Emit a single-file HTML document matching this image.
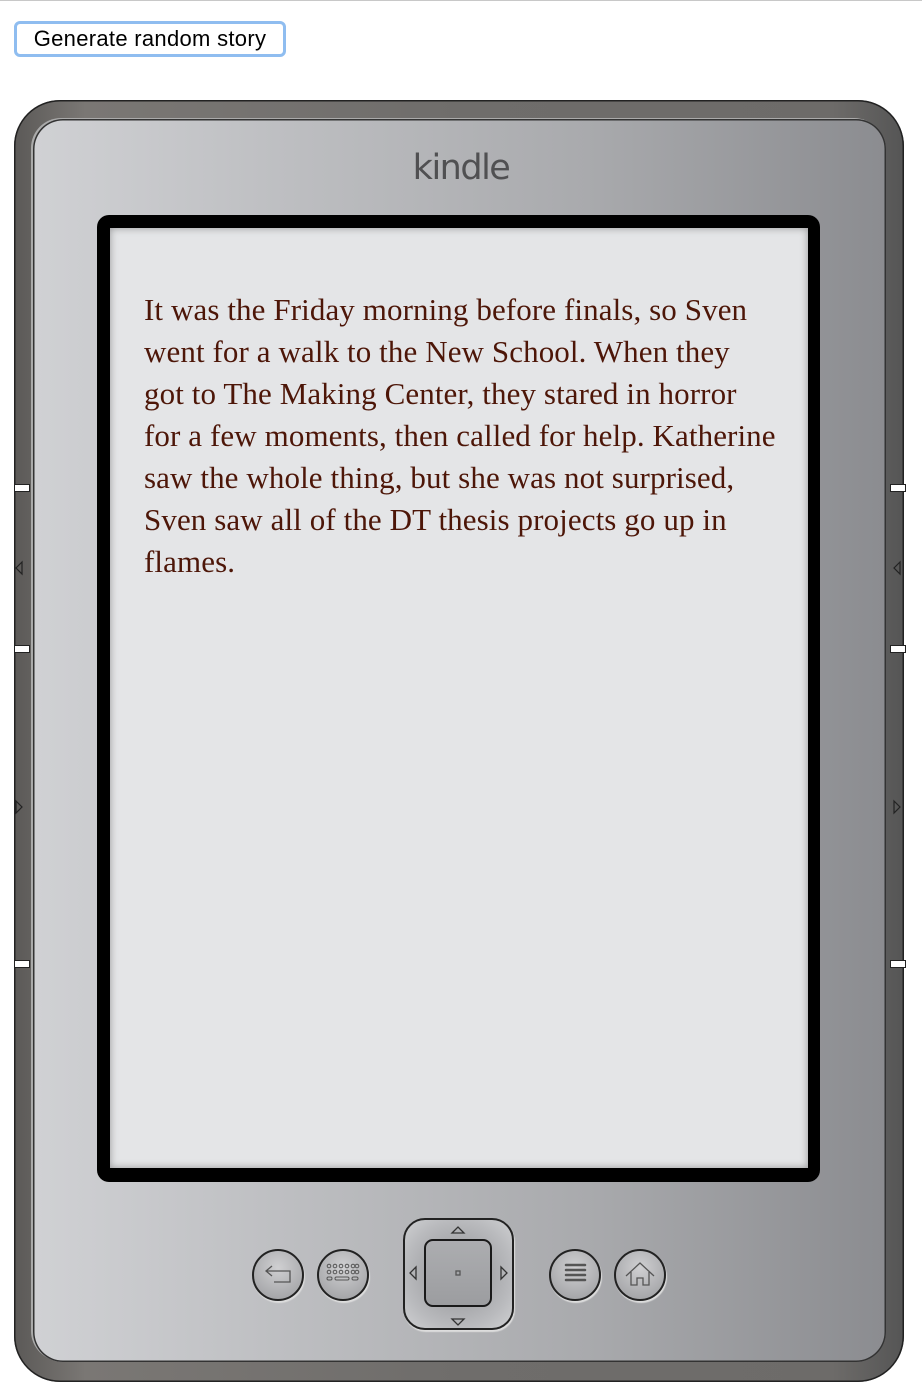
<!DOCTYPE html>
<html><head><style>
html,body{margin:0;padding:0;background:#fff;width:922px;height:1398px;overflow:hidden;position:relative;font-family:"Liberation Sans",sans-serif}
.topline{position:absolute;left:0;top:0;width:922px;height:1px;background:#c8c8c8}
button{position:absolute;left:14px;top:21px;width:272px;height:36px;border:3px solid #8fbdf0;border-radius:6px;background:#fff;font:22px "Liberation Sans",sans-serif;color:#000;padding:0;box-sizing:border-box;letter-spacing:0.3px}
.outer{position:absolute;left:14px;top:100px;width:890px;height:1282px;border-radius:46px;background:linear-gradient(90deg,#5b5957,#7a7774 8%,#6f6d6b 50%,#6d6b69 92%,#555);box-shadow:inset 0 0 0 1.5px #222}
.inner{position:absolute;left:33px;top:119px;width:853px;height:1243px;border-radius:30px;background:linear-gradient(90deg,#d0d1d4,#bdbec1 30%,#a9aaad 65%,#8b8c90);box-shadow:inset 0 0 0 1.5px #333, -2px -1px 0 #aaa}
.notch{position:absolute;width:16px;height:8px;background:#fff;border:1.5px solid #222;box-sizing:border-box}
.logo{position:absolute;left:0;width:922px;top:148px;text-align:center;font:35px "DejaVu Sans","Liberation Sans",sans-serif;color:#505052;letter-spacing:-1.5px}
.screen{position:absolute;left:97px;top:215px;width:723px;height:967px;border-radius:12px;background:#000}
.paper{position:absolute;left:110px;top:228px;width:698px;height:940px;background:#e4e5e7;box-shadow:inset 0 0 8px rgba(0,0,0,.35)}
.text{position:absolute;left:144px;top:289px;font:31px/42px "Liberation Serif",serif;color:#4d1608;white-space:nowrap;letter-spacing:0.1px}
.btn{position:absolute;width:52px;height:52px;border-radius:50%;border:2px solid #222;box-sizing:border-box;background:radial-gradient(circle at 50% 35%,#d0d0d2,#9a9b9e);box-shadow:1px 2px 1px #ddd}
.dpad{position:absolute;left:403px;top:1218px;width:111px;height:112px;border-radius:22px;border:2.5px solid #222;box-sizing:border-box;background:radial-gradient(circle,#8e8f92,#b9babd 70%,#cfd0d2);box-shadow:1px 2px 1px #ddd}
.dc{position:absolute;left:19px;top:19px;width:68px;height:68px;border-radius:9px;border:2.5px solid #1a1a1a;box-sizing:border-box;background:linear-gradient(#acadb0,#9c9da0)}
</style></head><body>
<div class="topline"></div>
<button>Generate random story</button>
<div class="outer"></div>
<div class="inner"></div>
<div class="notch" style="left:14px;top:484px"></div>
<div class="notch" style="left:14px;top:645px"></div>
<div class="notch" style="left:14px;top:960px"></div>
<div class="notch" style="left:890px;top:484px"></div>
<div class="notch" style="left:890px;top:645px"></div>
<div class="notch" style="left:890px;top:960px"></div>
<svg style="position:absolute;left:0;top:0" width="922" height="1398">
<g fill="none" stroke="#222" stroke-width="1.2">
<path d="M22 562 L16 568 L22 574 Z"/><path d="M16 801 L22 807 L16 813 Z"/>
<path d="M900 562 L894 568 L900 574 Z"/><path d="M894 801 L900 807 L894 813 Z"/>
</g>
</svg>
<div class="logo">kindle</div>
<div class="screen"></div>
<div class="paper"></div>
<div class="text">It was the Friday morning before finals, so Sven<br>went for a walk to the New School. When they<br>got to The Making Center, they stared in horror<br>for a few moments, then called for help. Katherine<br>saw the whole thing, but she was not surprised,<br>Sven saw all of the DT thesis projects go up in<br>flames.</div>
<div class="btn" style="left:252px;top:1249px"></div>
<div class="btn" style="left:317px;top:1249px"></div>
<div class="btn" style="left:549px;top:1249px"></div>
<div class="btn" style="left:614px;top:1249px"></div>
<div class="dpad"><div class="dc"></div></div>
<svg style="position:absolute;left:0;top:0" width="922" height="1398">
<g fill="none" stroke="#333" stroke-width="1.3">
<path d="M452 1233 L458 1227 L464 1233 Z"/><path d="M452 1319 L458 1325 L464 1319 Z"/>
<path d="M416 1267 L410 1273 L416 1279 Z"/><path d="M501 1267 L507 1273 L501 1279 Z"/>
</g>
<g fill="none" stroke="#555" stroke-width="1.3">
<path d="M272 1266 L266 1271 L272 1276 M266 1271 H290 V1282 H274"/>
<path d="M566 1265 H585 M566 1270 H585 M566 1275 H585 M566 1280 H585" stroke-width="2.5" stroke-linecap="round"/>
<path d="M626 1276 L640 1263 L654 1276 M631 1272 V1285 H637 V1278 H643 V1285 H649 V1272"/>
<rect x="456" y="1271" width="4" height="4"/>
</g>
<g fill="none" stroke="#555" stroke-width="1">
<circle cx="329" cy="1266" r="1.8"/><circle cx="335" cy="1266" r="1.8"/><circle cx="341" cy="1266" r="1.8"/><circle cx="347" cy="1266" r="1.8"/><circle cx="353" cy="1266" r="1.8"/><circle cx="357" cy="1266" r="1.8"/>
<circle cx="329" cy="1272" r="1.8"/><circle cx="335" cy="1272" r="1.8"/><circle cx="341" cy="1272" r="1.8"/><circle cx="347" cy="1272" r="1.8"/><circle cx="353" cy="1272" r="1.8"/><circle cx="357" cy="1272" r="1.8"/>
<rect x="327" y="1277" width="5" height="3" rx="1.5"/><rect x="335" y="1277" width="14" height="3" rx="1.5"/><rect x="352" y="1277" width="6" height="3" rx="1.5"/>
</g>
</svg>
</body></html>
